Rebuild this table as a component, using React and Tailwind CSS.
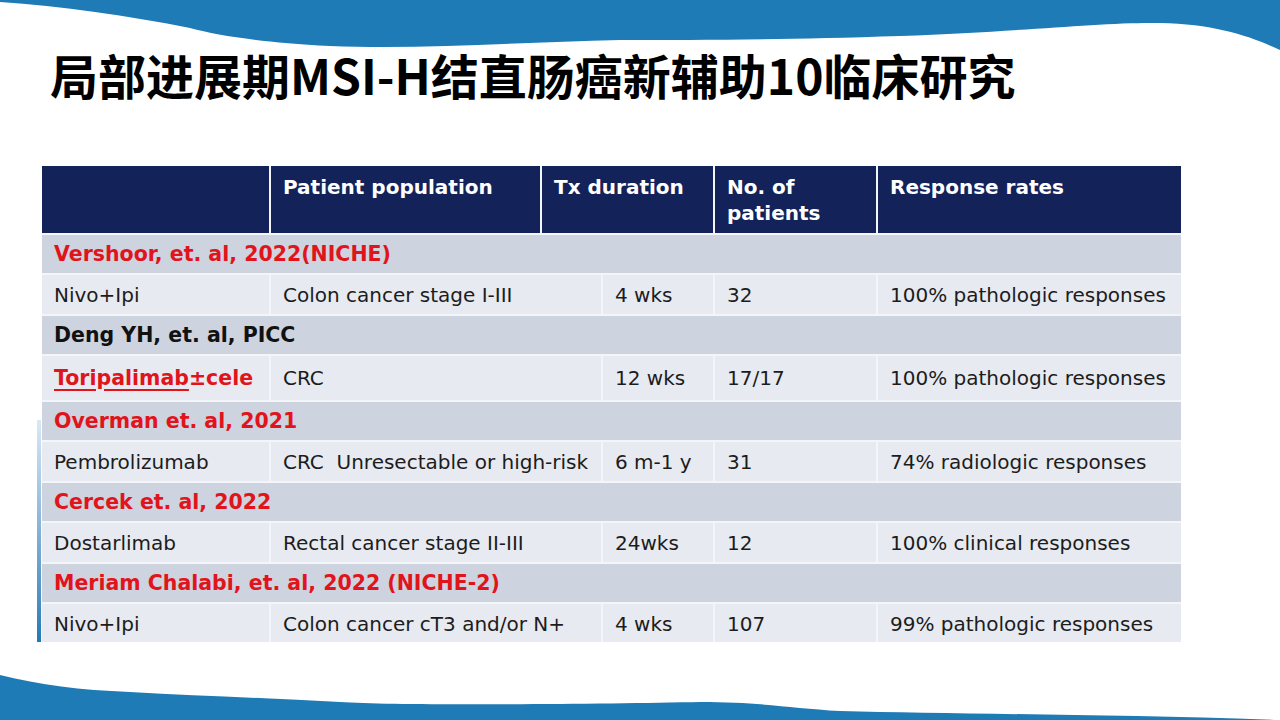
const font = { fontFamily: '"DejaVu Sans", Verdana, sans-serif' };

const groups = [
  {
    title: "Vershoor, et. al, 2022(NICHE)",
    red: true,
    row: ["Nivo+Ipi", "Colon cancer stage I-III", "4 wks", "32", "100% pathologic responses"],
  },
  {
    title: "Deng YH, et. al, PICC",
    red: false,
    row: ["TORI", "CRC", "12 wks", "17/17", "100% pathologic responses"],
    tall: true,
  },
  {
    title: "Overman et. al, 2021",
    red: true,
    row: ["Pembrolizumab", "CRC  Unresectable or high-risk", "6 m-1 y", "31", "74% radiologic responses"],
  },
  {
    title: "Cercek et. al, 2022",
    red: true,
    row: ["Dostarlimab", "Rectal cancer stage II-III", "24wks", "12", "100% clinical responses"],
  },
  {
    title: "Meriam Chalabi, et. al, 2022 (NICHE-2)",
    red: true,
    row: ["Nivo+Ipi", "Colon cancer cT3 and/or N+", "4 wks", "107", "99% pathologic responses"],
  },
];

function Cell({ children }) {
  if (children === "TORI") {
    return (
      <div className="flex items-center bg-[#e7eaf0] pl-3 text-[20.5px] font-bold text-[#e1141c] whitespace-pre">
        <span className="underline decoration-2 underline-offset-4">Toripalimab</span>
        <span>±cele</span>
      </div>
    );
  }
  return (
    <div className="flex items-center bg-[#e7eaf0] pl-3 text-[20px] text-[#1c1c1c] whitespace-pre">
      {children}
    </div>
  );
}

export default function App() {
  return (
    <div className="relative w-[1280px] h-[720px] overflow-hidden bg-white" style={font}>
      {/* top wave */}
      <svg className="absolute left-0 top-0" width="1280" height="100" viewBox="0 0 1280 100">
        <path
          d="M0,0 L1280,0 L1280,50 C1250,36 1215,24 1160,23 C1100,22 1020,32 900,36 C780,40 700,40 620,40 C520,42 420,50 330,46 C260,42 220,36 190,28 C130,16 60,6 0,2 Z"
          fill="#1f7bb6"
        />
      </svg>
      {/* bottom wave */}
      <svg className="absolute left-0 bottom-0" width="1280" height="50" viewBox="0 0 1280 50">
        <path
          d="M0,5 C40,15 80,20 130,22 C200,26 270,28 340,32 C400,36 600,34 700,32 C760,32 790,38 840,41 C950,44 1100,44 1280,50 L0,50 Z"
          fill="#1f7bb6"
        />
      </svg>

      <h1
        className="absolute left-[50px] top-[50px] text-[48px] leading-none font-bold text-black whitespace-nowrap"
        style={{ fontFamily: '"Noto Sans CJK SC", "Noto Sans", sans-serif' }}
      >
        局部进展期MSI-H结直肠癌新辅助10临床研究
      </h1>

      {/* vertical accent bar */}
      <div className="absolute left-[37px] top-[420px] w-[4px] h-[222px] bg-gradient-to-b from-[#dbe9f5] to-[#1f7bb6]" />

      <div className="absolute left-[42px] top-[166px] w-[1139px] h-[476px] overflow-hidden bg-[#f3f5f8] flex flex-col gap-[2px]">
        <div className="grid grid-cols-[227px_269px_171px_161px_303px] gap-[2px] h-[67px] shrink-0">
          {["", "Patient population", "Tx duration", "No. of\npatients", "Response rates"].map((t, i) => (
            <div
              key={i}
              className="bg-[#14225a] pl-3 pt-[8px] text-[20px] leading-[26px] font-bold text-white whitespace-pre"
            >
              {t}
            </div>
          ))}
        </div>
        {groups.map((g) => (
          <div key={g.title} className="flex flex-col gap-[2px]">
            <div
              className={`h-[38px] shrink-0 flex items-center bg-[#cdd3df] pl-3 text-[20.5px] font-bold ${
                g.red ? "text-[#e1141c]" : "text-[#111111]"
              }`}
            >
              {g.title}
            </div>
            <div
              className={`grid grid-cols-[227px_330px_110px_161px_303px] gap-[2px] shrink-0 ${
                g.tall ? "h-[44px]" : "h-[39px]"
              }`}
            >
              {g.row.map((c, i) => (
                <Cell key={i}>{c}</Cell>
              ))}
            </div>
          </div>
        ))}
      </div>
    </div>
  );
}
